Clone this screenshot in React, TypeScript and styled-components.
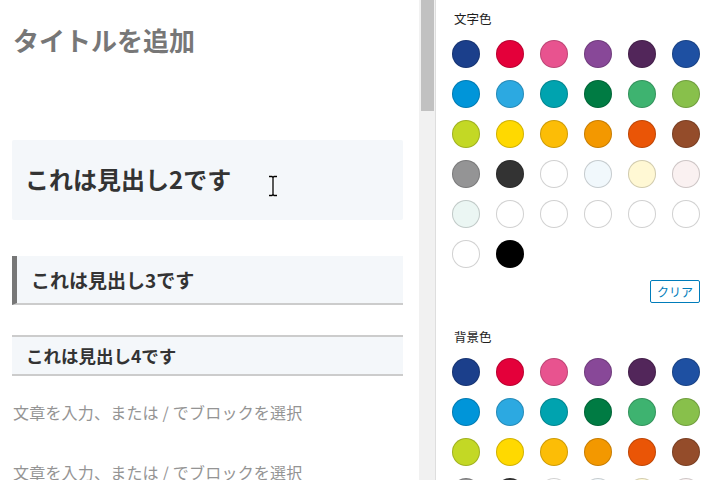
import React from "react";
import styled, { createGlobalStyle } from "styled-components";

const Global = createGlobalStyle`
  html, body { margin: 0; padding: 0; background: #fff; overflow: hidden; }
  body { font-family: "Noto Sans CJK JP", "Noto Sans", sans-serif; }
  * { box-sizing: border-box; }
`;

const Page = styled.div`
  display: flex;
  width: 712px;
  height: 480px;
  overflow: hidden;
  background: #fff;
`;

const Editor = styled.div`
  width: 419px;
  flex: none;
  display: flex;
  flex-direction: column;
  padding: 0 16px 0 12px;
  overflow: hidden;
  & > * { flex-shrink: 0; }
`;

const Title = styled.div`
  margin: 22px 0 0 1px;
  font-size: 26px;
  line-height: 36px;
  font-weight: 700;
  color: #777;
  white-space: nowrap;
`;

const H2 = styled.div`
  position: relative;
  margin-top: 82px;
  height: 80px;
  padding: 0 13px 4px;
  display: flex;
  align-items: center;
  background: #f4f7fa;
  border-radius: 2px;
  font-size: 24px;
  font-weight: 700;
  color: #333;
  white-space: nowrap;
`;

const H3 = styled.div`
  margin-top: 36px;
  height: 49px;
  padding: 0 14px;
  display: flex;
  align-items: center;
  background: #f4f7fa;
  border-left: 5px solid #777;
  border-bottom: 2px solid #ccc;
  font-size: 19px;
  font-weight: 700;
  color: #333;
  white-space: nowrap;
`;

const H4 = styled.div`
  margin-top: 30px;
  height: 41px;
  padding: 0 14px;
  display: flex;
  align-items: center;
  background: #f4f7fa;
  border-top: 2px solid #ccc;
  border-bottom: 2px solid #ccc;
  font-size: 17.5px;
  font-weight: 700;
  color: #333;
  white-space: nowrap;
`;

const Para = styled.div<{ $gap: number }>`
  margin: ${(p) => p.$gap}px 0 0 1px;
  font-size: 16px;
  line-height: 28px;
  color: #949494;
  white-space: nowrap;
  letter-spacing: 0.2px;
`;

const Cursor = styled.svg`
  position: absolute;
  left: 256px;
  top: 35px;
`;

const Track = styled.div`
  width: 17px;
  flex: none;
  background: #f1f1f1;
  border-right: 1px solid #dedede;
  padding-left: 2px;
`;

const Thumb = styled.div`
  width: 13px;
  height: 111px;
  background: #c1c1c1;
`;

const Sidebar = styled.div`
  flex: 1;
  display: flex;
  flex-direction: column;
  padding: 11px 11px 0 16px;
  & > * { flex-shrink: 0; }
`;

const Label = styled.div<{ $top?: number }>`
  margin: ${(p) => p.$top ?? 0}px 0 13px 2px;
  font-size: 12.5px;
  line-height: 16px;
  color: #1e1e1e;
`;

const Swatches = styled.div`
  display: grid;
  grid-template-columns: repeat(6, 28px);
  column-gap: 16px;
  row-gap: 12px;
`;

const Swatch = styled.div<{ $c: string }>`
  width: 28px;
  height: 28px;
  border-radius: 50%;
  background: ${(p) => p.$c};
  border: 1px solid rgba(0, 0, 0, 0.18);
`;

const Actions = styled.div`
  display: flex;
  justify-content: flex-end;
  margin-top: 12px;
  width: 248px;
`;

const ClearButton = styled.button`
  height: 23px;
  padding: 0 6px;
  border: 1px solid #007cba;
  border-radius: 2px;
  background: #fff;
  color: #007cba;
  font-family: "Noto Sans CJK JP", sans-serif;
  font-size: 12px;
  line-height: 20px;
`;

const COLORS = [
  "#1b3f8b", "#e4003a", "#e8538f", "#884898", "#52265a", "#1e50a2",
  "#0095d9", "#2ca9e1", "#00a3af", "#007b43", "#3eb370", "#88c04b",
  "#c3d825", "#ffd900", "#fcbd06", "#f39800", "#ea5506", "#944c2a",
  "#949495", "#333333", "#ffffff", "#f1f8fc", "#fff8d4", "#faf1f1",
  "#ebf6f3", "#ffffff", "#ffffff", "#ffffff", "#ffffff", "#ffffff",
  "#ffffff", "#000000",
];

const Palette = () => (
  <Swatches>
    {COLORS.map((c, i) => (
      <Swatch key={i} $c={c} />
    ))}
  </Swatches>
);

export default function App() {
  return (
    <>
      <Global />
      <Page>
        <Editor>
          <Title>タイトルを追加</Title>
          <H2>
            これは見出し2です
            <Cursor width="10" height="22" viewBox="0 0 10 22">
              <path
                d="M1 1.5h3l1 1 1-1h3M5 2.5v17M1 20.5h3l1-1 1 1h3"
                stroke="#fff"
                strokeWidth="3"
                fill="none"
              />
              <path
                d="M1 1.5h3l1 1 1-1h3M5 2.5v17M1 20.5h3l1-1 1 1h3"
                stroke="#000"
                strokeWidth="1.3"
                fill="none"
              />
            </Cursor>
          </H2>
          <H3>これは見出し3です</H3>
          <H4>これは見出し4です</H4>
          <Para $gap={22}>文章を入力、または / でブロックを選択</Para>
          <Para $gap={32}>文章を入力、または / でブロックを選択</Para>
        </Editor>
        <Track>
          <Thumb />
        </Track>
        <Sidebar>
          <Label>文字色</Label>
          <Palette />
          <Actions>
            <ClearButton>クリア</ClearButton>
          </Actions>
          <Label $top={26}>背景色</Label>
          <Palette />
        </Sidebar>
      </Page>
    </>
  );
}
